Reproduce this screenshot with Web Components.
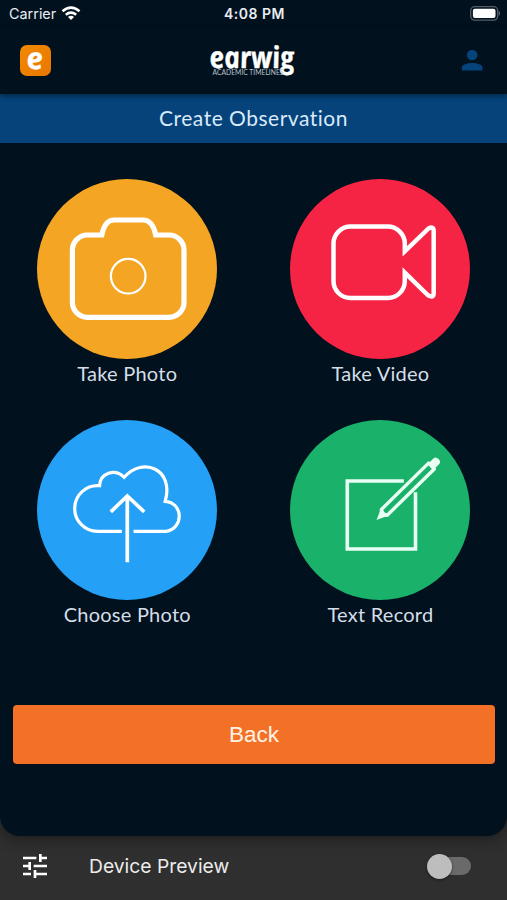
<!DOCTYPE html>
<html lang="en">
<head>
<meta charset="UTF-8">
<meta name="viewport" content="width=device-width, initial-scale=1.0">
<title>Create Observation</title>
<style>
    body {
        margin: 0;
        background: #2f2f2f;
        font-family: "Lato", sans-serif;
        color: #e6f0fa;
    }
</style>
</head>
<body>
<observation-app>
    <status-bar slot="top" carrier="Carrier">4:08 PM</status-bar>
    <app-header slot="top"></app-header>
    <title-bar slot="top">Create Observation</title-bar>

    <action-tile color="#f5a524">
        <svg slot="icon" viewBox="0 0 180 180" fill="none" stroke="#fff" stroke-width="5.2">
            <path d="M50.5 56H64.8C66.5 47.5 70.5 41 77 41H106C113 41 117 47.5 118.7 56H132A15 15 0 0 1 147 71V123.3A15 15 0 0 1 132 138.3H50.5A15 15 0 0 1 35.4 123.3V71A15 15 0 0 1 50.5 56Z"/>
            <circle cx="91.2" cy="97.2" r="17.3" stroke-width="2.2"/>
        </svg>
        Take Photo
    </action-tile>
    <action-tile color="#f62444">
        <svg slot="icon" viewBox="0 0 180 180" fill="none" stroke="#fff" stroke-width="4.5">
            <path d="M114.8 72.3V64.5A17 17 0 0 0 97.8 47.6H60.5A17 17 0 0 0 43.5 64.5V102A17 17 0 0 0 60.5 119H97.8A17 17 0 0 0 114.8 102V93.7L138 116.3Q143.7 119.5 143.7 114V52Q143.7 46.8 138.5 49.5Z" stroke-miterlimit="6"/>
        </svg>
        Take Video
    </action-tile>
    <action-tile color="#24a1f6">
        <svg slot="icon" viewBox="0 0 180 180" fill="none" stroke="#fff" stroke-width="3.2">
            <path d="M84.8 111.4H61.3A22.9 22.9 0 1 1 62.6 65.7C63.3 53 77.5 48 87.2 57.3C106 36 137.5 49 128.2 81.3C146 82.5 147.5 108 129 111.4H96.5"/>
            <path d="M90.3 142.3V76.5M73.8 91.8L90.3 76L107.2 91.8" stroke-width="3.7"/>
        </svg>
        Choose Photo
    </action-tile>
    <action-tile color="#1ab26b">
        <svg slot="icon" viewBox="0 0 180 180" fill="none" stroke="#e9fff3" stroke-width="3.6">
            <path d="M113.8 61H57.3V129H125.5V72.3"/>
            <g transform="translate(86.5 100) rotate(-44.5)">
                <path d="M11 -4.1H77V4.1H11L7 0Z" stroke-width="3.4" stroke-linejoin="round"/>
                <path d="M0 0L13 -5.8L11 0L13 5.8ZM77 -4H84Q87 -4 87 0Q87 4 84 4H77Z" fill="#e9fff3" stroke="none"/>
            </g>
        </svg>
        Text Record
    </action-tile>

    <back-button slot="bottom">Back</back-button>
</observation-app>
<preview-bar>Device Preview</preview-bar>

<script>
// Shared helper: attach a shadow root and fill it with the element's markup
class BaseElement extends HTMLElement {
    constructor(markup) {
        super();
        const template = document.createElement('template');
        template.innerHTML = markup;
        this.attachShadow({ mode: 'open' });
        this.shadowRoot.appendChild(template.content.cloneNode(true));
    }
}

// Device screen: header area, grid of tiles, footer area
class ObservationApp extends BaseElement {
    constructor() {
        super(/*html*/`
            <style>
                :host {
                    display: flex;
                    flex-direction: column;
                    box-sizing: border-box;
                    height: 836px;
                    background: #01111d;
                    border-radius: 0 0 20px 20px;
                    box-shadow: 0 2px 16px rgb(0 0 0 / 45%);
                }
                main {
                    display: grid;
                    grid-template-columns: 1fr 1fr;
                    grid-auto-rows: 241px;
                    padding: 36.5px 0 0 0.7px;
                    height: 526px;
                }
            </style>
            <slot name="top"></slot>
            <main><slot></slot></main>
            <slot name="bottom"></slot>
        `);
    }
}

class StatusBar extends BaseElement {
    constructor() {
        super(/*html*/`
            <style>
                :host {
                    display: grid;
                    grid-template-columns: 1fr auto 1fr;
                    align-items: center;
                    height: 27px;
                    padding: 0 7px 0 9px;
                    font: 14.4px "Inter", sans-serif;
                    color: #e8edf2;
                }
                .left { display: flex; align-items: center; gap: 5px; }
                .time { font-size: 14px; font-weight: 600; letter-spacing: 0.5px; }
                .battery { justify-self: end; margin-right: -2px; }
                svg { display: block; }
            </style>
            <div class="left">
                <span class="carrier"></span>
                <svg width="20" height="15" viewBox="0 0 20 15" fill="none" stroke="#fff" stroke-width="2.6">
                    <path d="M1.5 5.3Q10 -1.9 18.5 5.3M4.8 8.8Q10 4.6 15.2 8.8"/>
                    <path d="M7 11Q10 8.6 13 11L10 14Z" fill="#fff" stroke="none"/>
                </svg>
            </div>
            <div class="time"><slot></slot></div>
            <svg class="battery" width="32" height="15" viewBox="0 0 32 15">
                <rect x=".7" y=".7" width="27" height="13.4" rx="4" fill="none" stroke="#555e66" stroke-width="1.3"/>
                <rect x="2.9" y="2.8" width="22.6" height="9.2" rx="2" fill="#fff"/>
                <path d="M28.7 5Q30.2 5.5 30.2 7.4Q30.2 9.3 28.7 9.8Z" fill="#555e66"/>
            </svg>
        `);
        this.shadowRoot.querySelector('.carrier').textContent = this.getAttribute('carrier');
    }
}

class AppHeader extends BaseElement {
    constructor() {
        super(/*html*/`
            <style>
                :host {
                    display: grid;
                    grid-template-columns: 1fr auto 1fr;
                    align-items: center;
                    height: 67px;
                    padding: 0 20px;
                    position: relative;
                    box-shadow: 0 2px 5px rgb(0 0 0 / 45%);
                }
                svg { display: block; overflow: visible; }
                text { font-family: "Open Sans", sans-serif; fill: #fff; }
                .script { font-weight: 700; font-style: italic; stroke: #fff; stroke-width: 0.4; stroke-linejoin: round; }
                .tagline { font-family: "Lato", sans-serif; fill: #b9c3cc; }
                .badge {
                    width: 31px;
                    height: 31px;
                    margin-top: -1px;
                    border-radius: 7px;
                    background: linear-gradient(135deg, #f28a00, #e97700);
                }
                .user { justify-self: end; margin: 0 4px 1px 0; }
            </style>
            <svg class="badge" viewBox="0 0 31 31">
                <text class="script" x="4.5" y="23.5" font-size="30" textLength="16.5" lengthAdjust="spacingAndGlyphs" transform="skewX(7)">e</text>
            </svg>
            <svg width="90" height="40" viewBox="0 0 90 40">
                <text class="script" x="-2.5" y="26.8" font-size="30" textLength="85" lengthAdjust="spacingAndGlyphs" transform="skewX(9)">earwig</text>
                <text class="tagline" x="3.5" y="34.3" font-size="6.8" textLength="71" lengthAdjust="spacingAndGlyphs">ACADEMIC TIMELINES</text>
            </svg>
            <svg class="user" width="22" height="22" viewBox="0 0 22 22" fill="#05437a">
                <circle cx="11.2" cy="6" r="5.3"/>
                <path d="M.9 21.5V18.5C.9 12.5 21.5 12.5 21.5 18.5V21.5Z"/>
            </svg>
        `);
    }
}

class TitleBar extends BaseElement {
    constructor() {
        super(/*html*/`
            <style>
                :host {
                    display: flex;
                    align-items: center;
                    justify-content: center;
                    height: 48.5px;
                    background: #05437a;
                    font-size: 21px;
                    line-height: 24px;
                    letter-spacing: 0.5px;
                    color: #d9eafa;
                }
            </style>
            <slot></slot>
        `);
    }
}

// Round coloured icon with a caption below it
class ActionTile extends BaseElement {
    constructor() {
        super(/*html*/`
            <style>
                :host {
                    display: flex;
                    flex-direction: column;
                    align-items: center;
                    font-size: 20px;
                    line-height: 28px;
                    letter-spacing: 0.25px;
                    color: #d5dee8;
                }
                .disc {
                    width: 180px;
                    height: 180px;
                    border-radius: 50%;
                }
                ::slotted(svg) { display: block; width: 180px; height: 180px; }
            </style>
            <div class="disc"><slot name="icon"></slot></div>
            <div><slot></slot></div>
        `);
        this.shadowRoot.querySelector('.disc').style.background = this.getAttribute('color');
    }
}

class BackButton extends BaseElement {
    constructor() {
        super(/*html*/`
            <style>
                :host { display: flex; margin: 0 12px 0 13px; }
                button {
                    flex: 1;
                    height: 59px;
                    padding: 0;
                    border: 0;
                    border-radius: 4px;
                    background: #f37126;
                    color: #fff3e8;
                    font: 22.5px "Liberation Sans", sans-serif;
                }
            </style>
            <button><slot></slot></button>
        `);
    }
}

class PreviewBar extends BaseElement {
    constructor() {
        super(/*html*/`
            <style>
                :host {
                    display: flex;
                    align-items: center;
                    height: 64px;
                    box-sizing: border-box;
                    padding: 0 36px 4px 23px;
                    font: 19.3px "Inter", sans-serif;
                    color: #ececec;
                }
                .label { flex: 1; margin-left: 42px; }
                .switch {
                    display: flex;
                    align-items: center;
                    width: 44px;
                    height: 18px;
                    border-radius: 9px;
                    background: linear-gradient(90deg, transparent 8px, #6a6a6a 8px);
                }
                .knob {
                    width: 25px;
                    height: 25px;
                    border-radius: 50%;
                    background: #bdbdbd;
                    box-shadow: 0 1px 3px rgb(0 0 0 / 50%);
                }
            </style>
            <svg width="24" height="24" viewBox="3 3 18 18" fill="#fff">
                <path d="M3 17v2h6v-2H3zM3 5v2h10V5H3zm10 16v-2h8v-2h-8v-2h-2v6h2zM7 9v2H3v2h4v2h2V9H7zm14 4v-2H11v2h10zm-6-4h2V7h4V5h-4V3h-2v6z"/>
            </svg>
            <span class="label"><slot></slot></span>
            <div class="switch"><div class="knob"></div></div>
        `);
    }
}

customElements.define('observation-app', ObservationApp);
customElements.define('status-bar', StatusBar);
customElements.define('app-header', AppHeader);
customElements.define('title-bar', TitleBar);
customElements.define('action-tile', ActionTile);
customElements.define('back-button', BackButton);
customElements.define('preview-bar', PreviewBar);
</script>
</body>
</html>
